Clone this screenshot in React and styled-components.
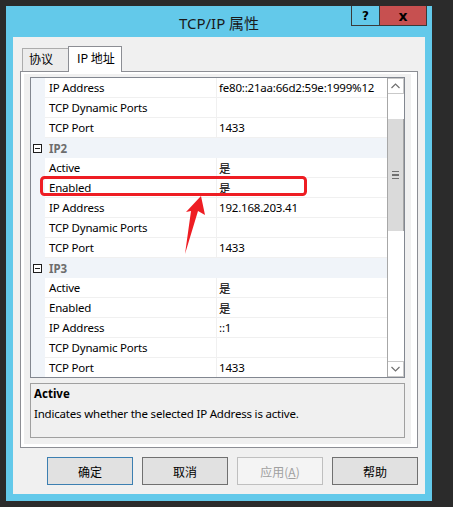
import React from 'react'
import styled, { createGlobalStyle } from 'styled-components'

const GlobalStyle = createGlobalStyle`
  html, body {
    margin: 0;
    padding: 0;
    background: #2b2b2b;
  }
  body {
    font-family: "Noto Sans", "Noto Sans CJK SC", sans-serif;
    font-size: 12px;
    color: #000;
  }
`

const Page = styled.div`
  position: relative;
  width: 453px;
  height: 507px;
  padding: 6px 0 0 6px;
  box-sizing: border-box;
`

const Window = styled.div`
  width: 426px;
  height: 495px;
  background: #63c9ea;
  padding: 0 7px 7px 7px;
  box-sizing: border-box;
  display: flex;
  flex-direction: column;
`

const TitleBar = styled.div`
  position: relative;
  height: 30px;
  flex: none;
  display: flex;
  align-items: center;
  justify-content: center;
  font-size: 15px;
  color: #1a1a1a;
  padding-top: 1px;
`

const CaptionButtons = styled.div`
  position: absolute;
  top: 0;
  right: -2px;
  display: flex;
`

const CaptionButton = styled.div`
  width: ${p => p.$w}px;
  height: 20px;
  box-sizing: border-box;
  border: 1px solid #3a3a3a;
  border-top: none;
  border-left-width: ${p => (p.$close ? 0 : 1)}px;
  background: ${p => (p.$close ? '#c75050' : '#63c9ea')};
  display: flex;
  align-items: center;
  justify-content: center;
  font-family: "DejaVu Sans", sans-serif;
  font-weight: bold;
  font-size: ${p => (p.$close ? 14 : 12)}px;
  color: #000;
`

const Client = styled.div`
  flex: 1;
  background: #f0f0f0;
  padding: 9px 7px 0 7px;
  display: flex;
  flex-direction: column;
`

const TabStrip = styled.div`
  display: flex;
  align-items: flex-end;
  height: 25px;
  padding-left: 2px;
  position: relative;
  z-index: 1;
`

const Tab = styled.div`
  box-sizing: border-box;
  width: ${p => (p.$active ? 54 : 46)}px;
  height: ${p => (p.$active ? 26 : 23)}px;
  margin-bottom: ${p => (p.$active ? -1 : 0)}px;
  padding: ${p => (p.$active ? '3px 0 0 8px' : '2px 0 0 6px')};
  border: 1px solid ${p => (p.$active ? '#8c8e94' : '#acacac')};
  border-bottom: none;
  ${p => !p.$active && 'border-right: none;'}
  background: ${p => (p.$active ? '#ffffff' : '#ececec')};
  font-family: "Noto Sans CJK SC", sans-serif;
  font-size: 12px;
  line-height: 16px;
  color: #000;
  white-space: nowrap;
`

const TabPanel = styled.div`
  width: 398px;
  box-sizing: border-box;
  border: 1px solid #8c8e94;
  background: #fff;
  padding: 2px 6px 3px 3px;
`

const PanelInner = styled.div`
  background: #f0f0f0;
  padding: 3px 6px 6px 6px;
  display: flex;
  flex-direction: column;
  gap: 5px;
`

const PropGrid = styled.div`
  height: 301px;
  box-sizing: border-box;
  border: 1px solid #828790;
  background: #fff;
  display: flex;
  overflow: hidden;
`

const Rows = styled.div`
  flex: 1;
  overflow: hidden;
`

const Row = styled.div`
  display: grid;
  grid-template-columns: 14px 172px 1fr;
  height: 20px;
  background: ${p => (p.$category ? '#f0f4f9' : '#fff')};
`

const Gutter = styled.div`
  background: #f0f4f9;
  display: flex;
  align-items: center;
  padding-left: 2px;
`

const Cell = styled.div`
  box-sizing: border-box;
  border-bottom: 1px solid #f0f0f0;
  ${p => p.$name && 'border-right: 1px solid #f0f0f0;'}
  padding-left: ${p => (p.$name ? 4 : 2)}px;
  display: flex;
  align-items: center;
  white-space: nowrap;
  overflow: hidden;
  font-size: 11.5px;
  color: #000;
  letter-spacing: -0.2px;
`

const CategoryCell = styled.div`
  grid-column: 2 / 4;
  padding-left: 4px;
  display: flex;
  align-items: center;
  font-weight: bold;
  color: #6d6d6d;
  font-size: 11.5px;
`

const CollapseBox = styled.span`
  width: 9px;
  height: 9px;
  box-sizing: border-box;
  border: 1px solid #1e1e1e;
  background: #fff;
  position: relative;
  &::after {
    content: '';
    position: absolute;
    left: 1px;
    right: 1px;
    top: 3px;
    height: 1px;
    background: #1e1e1e;
  }
`

const ScrollBar = styled.div`
  width: 17px;
  box-sizing: border-box;
  border-left: 1px solid #a7a7a7;
  display: flex;
  flex-direction: column;
  background: #fff;
`

const ScrollButton = styled.div`
  height: 16px;
  box-sizing: border-box;
  border: 1px solid #c9c9c9;
  border-left: none;
  display: flex;
  align-items: center;
  justify-content: center;
`

const Track = styled.div`
  height: ${p => p.$h}px;
  flex: ${p => (p.$fill ? 1 : 'none')};
`

const Thumb = styled.div`
  height: 112px;
  background: #dadada;
  border-right: 1px solid #a7a7a7;
  display: flex;
  flex-direction: column;
  align-items: center;
  justify-content: center;
  gap: 2px;
`

const Grip = styled.span`
  width: 7px;
  height: 1.5px;
  background: #707070;
`

const Description = styled.div`
  height: 55px;
  box-sizing: border-box;
  border: 1px solid #a0a0a0;
  padding: 1px 3px;
  font-size: 11.5px;
`

const DescTitle = styled.div`
  font-weight: bold;
  line-height: 17px;
`

const DescText = styled.div`
  margin-top: 3px;
  line-height: 17px;
  letter-spacing: -0.2px;
`

const ButtonRow = styled.div`
  display: flex;
  justify-content: flex-end;
  gap: 9px;
  padding-top: 9px;
`

const Button = styled.div`
  width: 86px;
  height: 28px;
  box-sizing: border-box;
  border: 1px solid ${p => (p.$default ? '#3c7fb1' : p.$disabled ? '#bfbfbf' : '#707070')};
  background: ${p => (p.$disabled ? '#f4f4f4' : '#e1e1e1')};
  color: ${p => (p.$disabled ? '#a0a0a0' : '#000')};
  display: flex;
  align-items: center;
  justify-content: center;
  font-family: "Noto Sans CJK SC", sans-serif;
  font-size: 12px;
`

const Overlay = styled.svg`
  position: absolute;
  left: 0;
  top: 0;
  pointer-events: none;
`

const sections = [
  {
    rows: [
      ['IP Address', 'fe80::21aa:66d2:59e:1999%12'],
      ['TCP Dynamic Ports', ''],
      ['TCP Port', '1433']
    ]
  },
  {
    title: 'IP2',
    rows: [
      ['Active', '是'],
      ['Enabled', '是'],
      ['IP Address', '192.168.203.41'],
      ['TCP Dynamic Ports', ''],
      ['TCP Port', '1433']
    ]
  },
  {
    title: 'IP3',
    rows: [
      ['Active', '是'],
      ['Enabled', '是'],
      ['IP Address', '::1'],
      ['TCP Dynamic Ports', ''],
      ['TCP Port', '1433']
    ]
  }
]

const Chevron = ({ down }) => (
  <svg width="9" height="6" viewBox="0 0 9 6">
    <path
      d={down ? 'M0.5 1 L4.5 5 L8.5 1' : 'M0.5 5 L4.5 1 L8.5 5'}
      fill="none"
      stroke="#707070"
      strokeWidth="1.2"
    />
  </svg>
)

export default function App() {
  return (
    <Page>
      <GlobalStyle />
      <Window>
        <TitleBar>
          <span>TCP/IP 属性</span>
          <CaptionButtons>
            <CaptionButton $w={29}>?</CaptionButton>
            <CaptionButton $w={47} $close>x</CaptionButton>
          </CaptionButtons>
        </TitleBar>
        <Client>
          <TabStrip>
            <Tab>协议</Tab>
            <Tab $active>IP 地址</Tab>
          </TabStrip>
          <TabPanel>
            <PanelInner>
              <PropGrid>
                <Rows>
                  {sections.map((s, i) => (
                    <React.Fragment key={i}>
                      {s.title && (
                        <Row $category>
                          <Gutter>
                            <CollapseBox />
                          </Gutter>
                          <CategoryCell>{s.title}</CategoryCell>
                        </Row>
                      )}
                      {s.rows.map(([name, value], j) => (
                        <Row key={j}>
                          <Gutter />
                          <Cell $name>{name}</Cell>
                          <Cell>{value}</Cell>
                        </Row>
                      ))}
                    </React.Fragment>
                  ))}
                </Rows>
                <ScrollBar>
                  <ScrollButton>
                    <Chevron />
                  </ScrollButton>
                  <Track $h={25} />
                  <Thumb>
                    <Grip />
                    <Grip />
                    <Grip />
                  </Thumb>
                  <Track $fill />
                  <ScrollButton>
                    <Chevron down />
                  </ScrollButton>
                </ScrollBar>
              </PropGrid>
              <Description>
                <DescTitle>Active</DescTitle>
                <DescText>Indicates whether the selected IP Address is active.</DescText>
              </Description>
            </PanelInner>
          </TabPanel>
          <ButtonRow>
            <Button $default>确定</Button>
            <Button>取消</Button>
            <Button $disabled>
              <span>
                应用(<u>A</u>)
              </span>
            </Button>
            <Button>帮助</Button>
          </ButtonRow>
        </Client>
      </Window>
      <Overlay width="453" height="507" viewBox="0 0 453 507">
        <rect
          x="41.5"
          y="177.5"
          width="264"
          height="17"
          rx="3"
          fill="none"
          stroke="#ee1d23"
          strokeWidth="3"
        />
        <polygon
          points="201,196 205,215 198,211 185,254 191,211 186,212"
          fill="#ee1d23"
        />
      </Overlay>
    </Page>
  )
}
